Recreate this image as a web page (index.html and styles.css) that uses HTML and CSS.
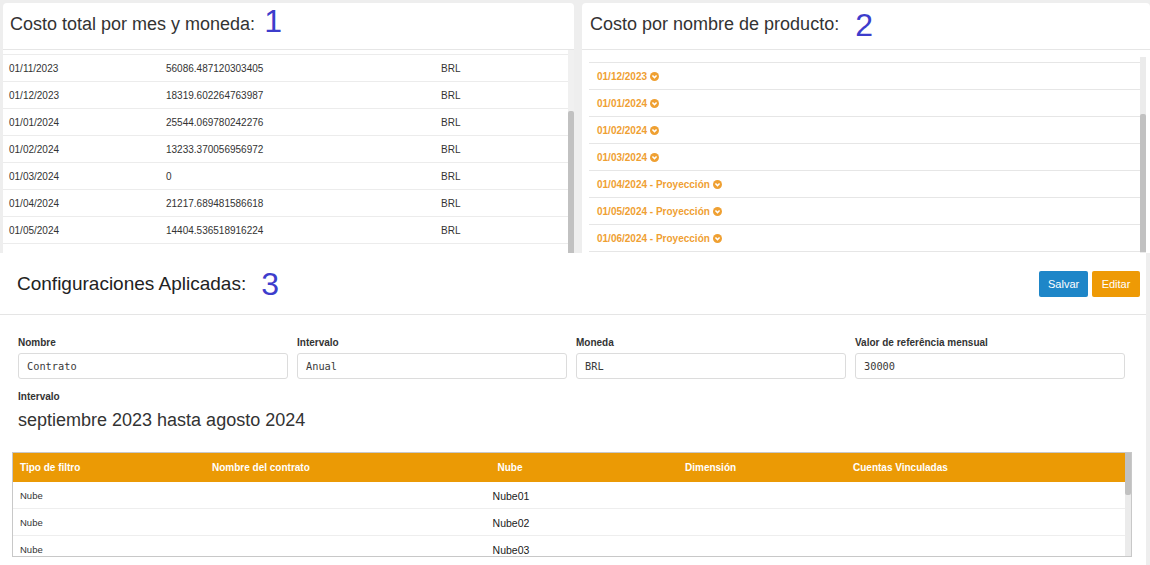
FILE: index.html
```html
<!DOCTYPE html>
<html lang="es">
<head>
<meta charset="utf-8">
<title>Costos</title>
<link rel="stylesheet" href="styles.css">
</head>
<body>
<div class="top">
  <section class="panel p1">
    <header class="panel-head"><h2 class="title">Costo total por mes y moneda:<span class="mark m1">1</span></h2></header>
    <div class="panel-body body1">
      <div class="rows">
        <div class="cut"></div>
        <div class="r1"><span>01/11/2023</span><span>56086.487120303405</span><span>BRL</span></div>
        <div class="r1"><span>01/12/2023</span><span>18319.602264763987</span><span>BRL</span></div>
        <div class="r1"><span>01/01/2024</span><span>25544.069780242276</span><span>BRL</span></div>
        <div class="r1"><span>01/02/2024</span><span>13233.370056956972</span><span>BRL</span></div>
        <div class="r1"><span>01/03/2024</span><span>0</span><span>BRL</span></div>
        <div class="r1"><span>01/04/2024</span><span>21217.689481586618</span><span>BRL</span></div>
        <div class="r1"><span>01/05/2024</span><span>14404.536518916224</span><span>BRL</span></div>
      </div>
      <div class="sbar"><div class="thumb t1"></div></div>
    </div>
  </section>
  <section class="panel p2">
    <header class="panel-head"><h2 class="title">Costo por nombre de producto:<span class="mark m2">2</span></h2></header>
    <div class="panel-body body2">
      <div class="rows">
        <div class="cut cut2"></div>
        <div class="r2">01/12/2023<svg class="chev" viewBox="0 0 10 10"><circle cx="5" cy="5" r="5"/><path d="M2.7 3.9 L5 6.2 L7.3 3.9"/></svg></div>
        <div class="r2">01/01/2024<svg class="chev" viewBox="0 0 10 10"><circle cx="5" cy="5" r="5"/><path d="M2.7 3.9 L5 6.2 L7.3 3.9"/></svg></div>
        <div class="r2">01/02/2024<svg class="chev" viewBox="0 0 10 10"><circle cx="5" cy="5" r="5"/><path d="M2.7 3.9 L5 6.2 L7.3 3.9"/></svg></div>
        <div class="r2">01/03/2024<svg class="chev" viewBox="0 0 10 10"><circle cx="5" cy="5" r="5"/><path d="M2.7 3.9 L5 6.2 L7.3 3.9"/></svg></div>
        <div class="r2">01/04/2024 - Proyección<svg class="chev" viewBox="0 0 10 10"><circle cx="5" cy="5" r="5"/><path d="M2.7 3.9 L5 6.2 L7.3 3.9"/></svg></div>
        <div class="r2">01/05/2024 - Proyección<svg class="chev" viewBox="0 0 10 10"><circle cx="5" cy="5" r="5"/><path d="M2.7 3.9 L5 6.2 L7.3 3.9"/></svg></div>
        <div class="r2">01/06/2024 - Proyección<svg class="chev" viewBox="0 0 10 10"><circle cx="5" cy="5" r="5"/><path d="M2.7 3.9 L5 6.2 L7.3 3.9"/></svg></div>
      </div>
      <div class="sbar sbar2"><div class="thumb t2"></div></div>
    </div>
  </section>
</div>

<section class="p3">
  <header class="cfg-head">
    <h2 class="title title3">Configuraciones Aplicadas:<span class="mark m3">3</span></h2>
    <div class="btns">
      <button class="btn btn-blue">Salvar</button>
      <button class="btn btn-orange">Editar</button>
    </div>
  </header>
  <div class="cfg-body">
    <div class="fields">
      <div class="field"><label>Nombre</label><div class="input">Contrato</div></div>
      <div class="field"><label>Intervalo</label><div class="input">Anual</div></div>
      <div class="field"><label>Moneda</label><div class="input">BRL</div></div>
      <div class="field"><label>Valor de referência mensual</label><div class="input">30000</div></div>
    </div>
    <div class="interval">
      <label>Intervalo</label>
      <p class="interval-val">septiembre 2023 hasta agosto 2024</p>
    </div>
  </div>
  <div class="tbl">
    <div class="tbl-main">
      <div class="thead">
        <span>Tipo de filtro</span><span>Nombre del contrato</span><span class="c3">Nube</span><span>Dimensión</span><span>Cuentas Vinculadas</span>
      </div>
      <div class="trow"><span>Nube</span><span></span><span class="c3 nube">Nube01</span><span></span><span></span></div>
      <div class="trow"><span>Nube</span><span></span><span class="c3 nube">Nube02</span><span></span><span></span></div>
      <div class="trow last"><span>Nube</span><span></span><span class="c3 nube">Nube03</span><span></span><span></span></div>
    </div>
    <div class="sbar sbar3"><div class="thumb t3"></div></div>
  </div>
</section>
</body>
</html>
```

FILE: styles.css
```css
* { box-sizing: border-box; }

body {
  margin: 0;
  width: 1150px;
  height: 565px;
  overflow: hidden;
  background: #eeeeee;
  font-family: "Liberation Sans", Arial, sans-serif;
  color: #333;
}

.top {
  display: flex;
  gap: 8px;
  padding: 3px 0 0 3px;
  height: 253px;
}

.panel {
  background: #fff;
  border-radius: 4px 4px 0 0;
  display: flex;
  flex-direction: column;
  overflow: hidden;
}

.p1 { width: 571px; }
.p2 { width: 568px; }

.panel-head {
  height: 47px;
  flex: none;
  border-bottom: 1px solid #e6e6e6;
  display: flex;
  align-items: center;
  padding: 0 0 5px 7px;
}

.p2 .panel-head { padding-left: 8px; }

.title {
  margin: 0;
  font-size: 18px;
  font-weight: normal;
  line-height: 22px;
  white-space: nowrap;
  color: #333;
}

.mark {
  color: #3d3dcc;
  font-size: 32px;
  line-height: 0;
}

.m1 { margin-left: 9px; vertical-align: -2px; }
.m2 { margin-left: 16px; vertical-align: -6px; }
.m3 { margin-left: 15px; vertical-align: -5px; }

.panel-body {
  display: flex;
  height: 203px;
  flex: none;
}

.rows {
  flex: 1;
  overflow: hidden;
}

.cut {
  height: 5px;
  border-bottom: 1px solid #ececec;
}

.r1 {
  display: grid;
  grid-template-columns: 157px 275px 1fr;
  align-items: center;
  height: 27px;
  border-bottom: 1px solid #ececec;
  font-size: 10px;
  color: #333;
}

.r1 span { padding-left: 6px; }

.sbar {
  width: 6px;
  flex: none;
  background: #f0f0f0;
  display: flex;
  flex-direction: column;
}

.thumb {
  background: #c1c1c1;
  border-radius: 2px 2px 0 0;
}

.t1 { margin-top: 61px; flex: 1; }

.body2 {
  padding: 7px 4px 0 7px;
}

.cut2 {
  height: 6px;
  border-bottom: 1px solid #e6e6e6;
}

.r2 {
  display: flex;
  align-items: center;
  gap: 3px;
  height: 27px;
  padding-left: 8px;
  border-bottom: 1px solid #e6e6e6;
  font-size: 10px;
  font-weight: bold;
  color: #efa032;
}

.chev {
  width: 9px;
  height: 9px;
}

.chev circle { fill: #efa032; }
.chev path { fill: none; stroke: #fff; stroke-width: 1.7; }

.sbar2 { background: #ebebeb; }
.t2 { margin-top: 57px; flex: 1; margin-bottom: 1px; }

/* Config panel */
.p3 {
  width: 1146px;
  height: 312px;
  background: #fff;
}

.cfg-head {
  height: 62px;
  border-bottom: 1px solid #e5e5e5;
  display: flex;
  align-items: center;
  justify-content: space-between;
  padding: 0 6px 0 17px;
}

.title3 {
  font-size: 19px;
  color: #222;
}

.btns {
  display: flex;
  gap: 4px;
}

.btn {
  height: 26px;
  border: 0;
  border-radius: 2px;
  color: #fff;
  font-family: "Liberation Sans", Arial, sans-serif;
  font-size: 11px;
  padding: 0 9px;
}

.btn-blue { background: #1e86c8; width: 49px; }
.btn-orange { background: #ee9a05; width: 48px; }

.cfg-body {
  padding: 22px 21px 0 18px;
}

.fields {
  display: grid;
  grid-template-columns: repeat(4, 270px);
  gap: 9px;
}

.field label,
.interval label {
  display: block;
  font-size: 10px;
  font-weight: bold;
  line-height: 12px;
  color: #333;
}

.field label { margin-bottom: 4px; }

.input {
  height: 26px;
  border: 1px solid #dcdcdc;
  border-radius: 3px;
  padding-left: 8px;
  display: flex;
  align-items: center;
  font-family: "DejaVu Sans Mono", "Liberation Mono", monospace;
  font-size: 10.3px;
  color: #3a3a3a;
}

.interval label { margin-top: 12px; }

.interval-val {
  margin: 6px 0 0;
  font-size: 18px;
  line-height: 22px;
  color: #333;
}

.tbl {
  margin: 21px 14px 0 12px;
  height: 105px;
  border: 1px solid #c8c8c8;
  display: flex;
}

.tbl-main {
  flex: 1;
  overflow: hidden;
}

.thead,
.trow {
  display: grid;
  grid-template-columns: 192px 137px 336px 168px 1fr;
  align-items: center;
}

.thead span,
.trow span { padding-left: 7px; }

.thead .c3,
.trow .c3 { padding-left: 0; text-align: center; }

.thead {
  height: 29px;
  background: #eb9a05;
  color: #fff;
  font-size: 10px;
  font-weight: bold;
}

.trow {
  height: 27px;
  border-bottom: 1px solid #eeeeee;
  font-size: 9.5px;
  color: #333;
}

.trow.last {
  height: 20px;
  align-items: start;
  padding-top: 8px;
  border-bottom: 0;
}

.trow .nube {
  font-size: 10.5px;
  color: #1a1a1a;
  padding-left: 2px;
  padding-top: 2px;
}

.trow.last .nube { padding-top: 0; }

.sbar3 { background: #ebebeb; }
.t3 { height: 42px; border-radius: 0 0 2px 2px; }
```
